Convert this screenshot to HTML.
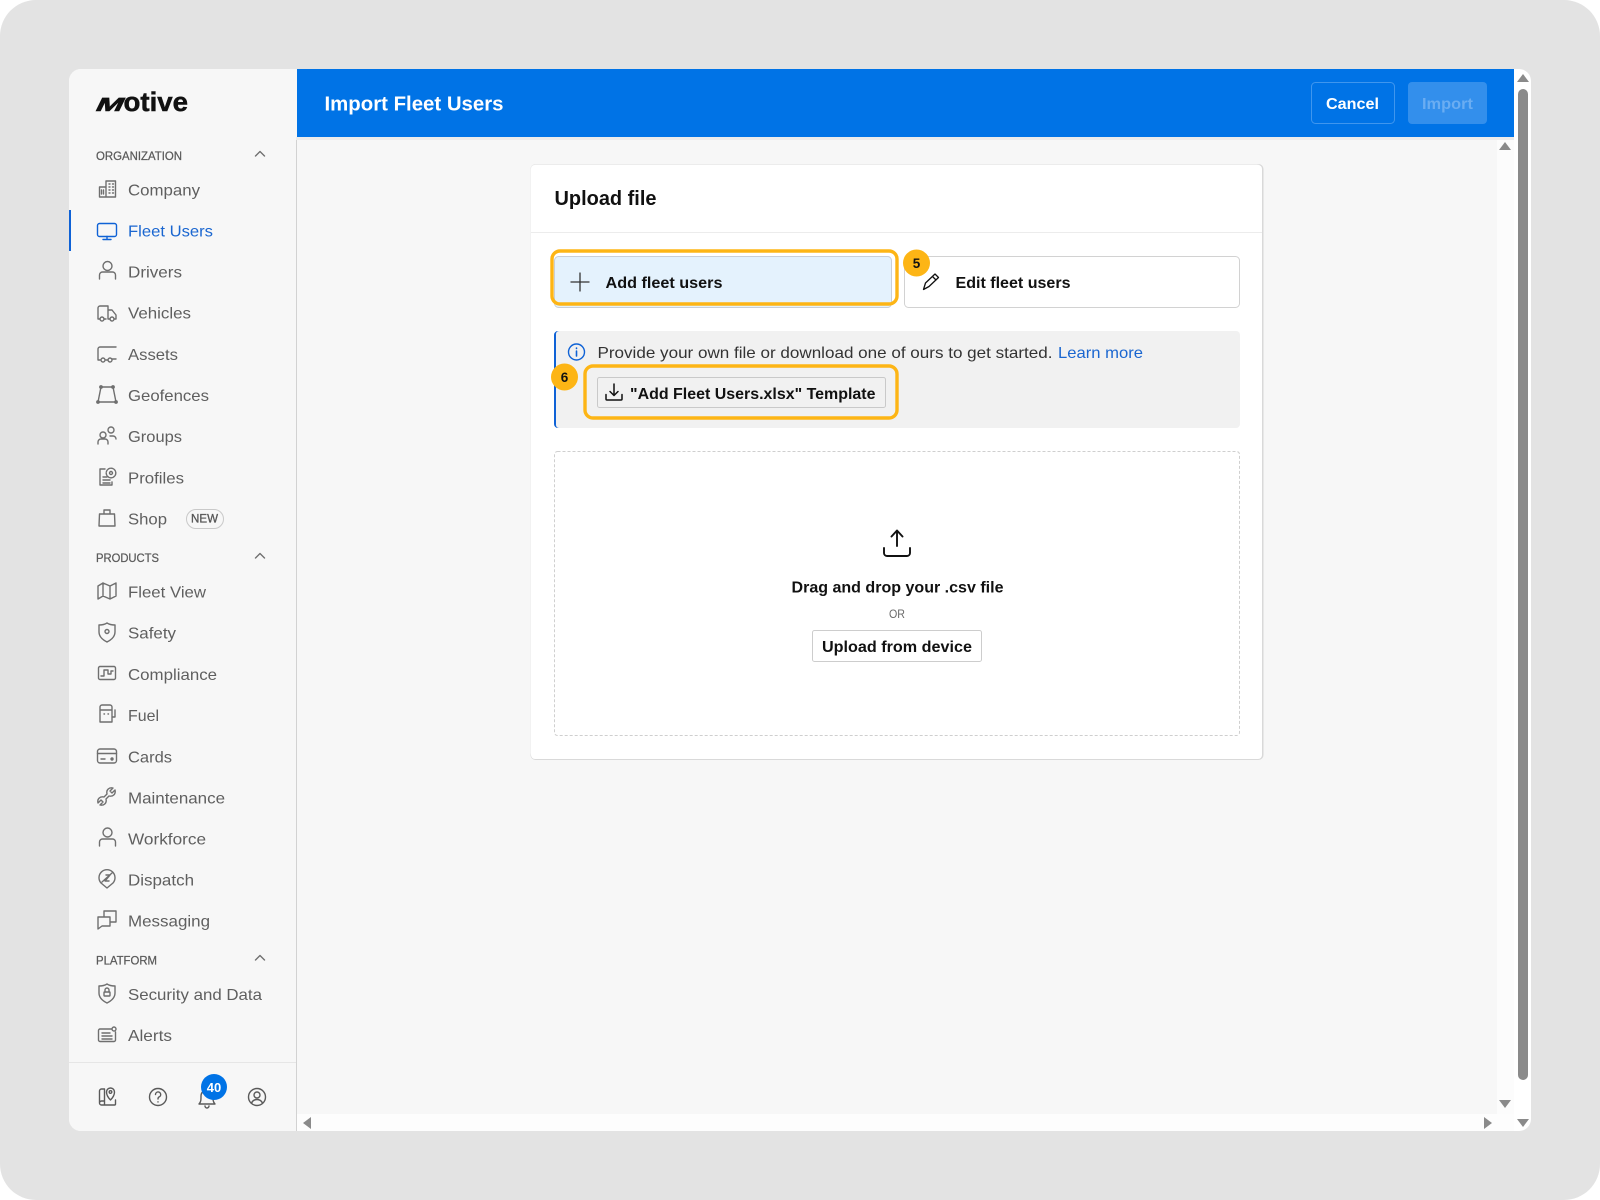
<!DOCTYPE html>
<html lang="en"><head><meta charset="utf-8"><title>Import Fleet Users</title>
<style>
html,body{margin:0;padding:0;background:#fff;width:1600px;height:1200px;overflow:hidden}
svg{display:block}
text{font-family:"Liberation Sans",sans-serif}
.n{font-size:16px;fill:#5f5f5f}
.s{font-size:12px;fill:#5a5a5a;stroke:#5a5a5a;stroke-width:.25}
.b{font-size:16px;font-weight:700;fill:#111}
.i{fill:none;stroke:#6f6f6f;stroke-width:1.4;stroke-linecap:round;stroke-linejoin:round}
.k{fill:none;stroke:#111;stroke-width:1.5;stroke-linecap:round;stroke-linejoin:round}
.o{fill:none;stroke:#fdb515;stroke-width:3.4}
.a{fill:#8a8a8a}
</style></head><body>
<svg xmlns="http://www.w3.org/2000/svg" width="1600" height="1200" viewBox="0 0 1600 1200">
<rect width="1600" height="1200" fill="#fff"/>
<rect width="1600" height="1200" rx="36" fill="#e3e3e3"/>
<rect x="69" y="69" width="1462" height="1062" rx="12" fill="#fff"/>
<path d="M81 69H297V1131H81a12 12 0 0 1-12-12V81a12 12 0 0 1 12-12z" fill="#f7f7f7"/>
<rect x="296" y="137" width="1" height="994" fill="#d2d2d2"/>
<rect x="297" y="137" width="1200" height="977" fill="#f7f7f7"/>
<rect x="1497" y="137" width="17" height="977" fill="#fcfcfc"/>
<rect x="297" y="1114" width="1217" height="17" fill="#fdfdfd"/>
<rect x="296" y="137" width="1218" height="3" fill="#ececec"/>
<rect x="297" y="69" width="1217" height="68" fill="#0073e6"/>

<text x="324.500" y="110.500" font-size="20" font-weight="700" fill="#fff" textLength="179" lengthAdjust="spacingAndGlyphs">Import Fleet Users</text>
<rect x="1311.500" y="82.500" width="83" height="41" rx="4" fill="none" stroke="#3f96ee"/>
<text x="1326" y="109" font-size="16" font-weight="700" fill="#fff" textLength="53" lengthAdjust="spacingAndGlyphs">Cancel</text>
<rect x="1408" y="82" width="79" height="42" rx="4" fill="#338fec"/>
<text x="1422" y="109" font-size="16" font-weight="700" fill="#6aadf2" textLength="51" lengthAdjust="spacingAndGlyphs">Import</text>

<path class="a" d="M1523 74l6 8h-12zM1523 1127l-6-8h12zM1505 142l6 8h-12zM1505 1108l-6-8h12zM1492 1123l-8-6v12zM303 1123l8-6v12z"/>
<rect x="1518" y="89" width="10" height="991" rx="5" fill="#8a8a8a"/>

<text font-size="19" font-weight="700" fill="#111" stroke="#111" stroke-width=".6" x="0" y="0" transform="translate(94 111) skewX(-26)" textLength="27" lengthAdjust="spacingAndGlyphs">M</text>
<text x="123.500" y="111" font-size="27" font-weight="700" fill="#111" stroke="#111" stroke-width=".5" textLength="64.500" lengthAdjust="spacingAndGlyphs">otive</text>

<text class="s" x="96" y="160" textLength="86" lengthAdjust="spacingAndGlyphs">ORGANIZATION</text>
<text class="s" x="96" y="562" textLength="63" lengthAdjust="spacingAndGlyphs">PRODUCTS</text>
<text class="s" x="96" y="964.500" textLength="61" lengthAdjust="spacingAndGlyphs">PLATFORM</text>
<path class="i" d="M255.500 156l4.500-4.500 4.500 4.500M255.500 558l4.500-4.500 4.500 4.500M255.500 960l4.500-4.500 4.500 4.500"/>

<rect x="69" y="210" width="2" height="41" fill="#0f62d6"/>
<text class="n" x="128" y="195.300" textLength="72" lengthAdjust="spacingAndGlyphs">Company</text>
<text class="n" x="128" y="236.300" textLength="85" lengthAdjust="spacingAndGlyphs" style="fill:#1a66d0">Fleet Users</text>
<text class="n" x="128" y="277.300" textLength="54" lengthAdjust="spacingAndGlyphs">Drivers</text>
<text class="n" x="128" y="318.300" textLength="63" lengthAdjust="spacingAndGlyphs">Vehicles</text>
<text class="n" x="128" y="360" textLength="50" lengthAdjust="spacingAndGlyphs">Assets</text>
<text class="n" x="128" y="401" textLength="81" lengthAdjust="spacingAndGlyphs">Geofences</text>
<text class="n" x="128" y="442" textLength="54" lengthAdjust="spacingAndGlyphs">Groups</text>
<text class="n" x="128" y="483.300" textLength="56" lengthAdjust="spacingAndGlyphs">Profiles</text>
<text class="n" x="128" y="524.300" textLength="39" lengthAdjust="spacingAndGlyphs">Shop</text>
<rect x="186.500" y="509.500" width="37" height="19" rx="9.500" fill="none" stroke="#c9c9c9"/>
<text x="191" y="522.500" font-size="12" fill="#555" stroke="#555" stroke-width=".3" textLength="27" lengthAdjust="spacingAndGlyphs">NEW</text>
<text class="n" x="128" y="597.500" textLength="78" lengthAdjust="spacingAndGlyphs">Fleet View</text>
<text class="n" x="128" y="638.500" textLength="48" lengthAdjust="spacingAndGlyphs">Safety</text>
<text class="n" x="128" y="680" textLength="89" lengthAdjust="spacingAndGlyphs">Compliance</text>
<text class="n" x="128" y="721" textLength="31" lengthAdjust="spacingAndGlyphs">Fuel</text>
<text class="n" x="128" y="762.500" textLength="44" lengthAdjust="spacingAndGlyphs">Cards</text>
<text class="n" x="128" y="803.500" textLength="97" lengthAdjust="spacingAndGlyphs">Maintenance</text>
<text class="n" x="128" y="844.500" textLength="78" lengthAdjust="spacingAndGlyphs">Workforce</text>
<text class="n" x="128" y="885.500" textLength="66" lengthAdjust="spacingAndGlyphs">Dispatch</text>
<text class="n" x="128" y="926.500" textLength="82" lengthAdjust="spacingAndGlyphs">Messaging</text>
<text class="n" x="128" y="1000" textLength="134" lengthAdjust="spacingAndGlyphs">Security and Data</text>
<text class="n" x="128" y="1041" textLength="44" lengthAdjust="spacingAndGlyphs">Alerts</text>

<g class="i">
<g transform="translate(107.500 189)"><path d="M-1.500-8V8H8V-8zM-1.500-2H-8V8H-1.500M-6 1v4M-4 1v4M1.500-5h1M5-5h1M1.500-2h1M5-2h1M1.500 1h1M5 1h1M1.500 4h1M5 4h1"/></g>
<g transform="translate(107 230)" style="stroke:#0f62d6"><rect x="-9.500" y="-6.500" width="19" height="13" rx="2"/><path d="M0 6.500V9M-4 9.500H4"/></g>
<g transform="translate(107.500 272)"><circle cy="-6" r="4.500"/><path d="M-8 7V3a3 3 0 0 1 3-3H5a3 3 0 0 1 3 3v4"/></g>
<g transform="translate(107 313)"><path d="M-7 6H-9V-5a2 2 0 0 1 2-2H1V6M1-3H5L9 2V6H7M-1 6H-3M1 6H3"/><circle cx="-5" cy="6" r="2"/><circle cx="5" cy="6" r="2"/></g>
<g transform="translate(107 354)"><path d="M9-7H-7a2 2 0 0 0-2 2V6H-7M9 5H5M-1 6H1"/><circle cx="-4" cy="6" r="2"/><circle cx="3" cy="6" r="2"/></g>
<g transform="translate(107 395)"><path d="M-6-8H6L9 7H-9z"/><circle cx="-6" cy="-8" r="1.200"/><circle cx="6" cy="-8" r="1.200"/><circle cx="-9" cy="7" r="1.200"/><circle cx="9" cy="7" r="1.200"/></g>
<g transform="translate(107 436)"><circle cx="-4" cy="-1" r="3"/><circle cx="4" cy="-6" r="3"/><path d="M-9 8V6a3 3 0 0 1 3-3H-2a3 3 0 0 1 3 3v2M3 0H6a3 3 0 0 1 3 3"/></g>
<g transform="translate(107 477)"><path d="M-2-8H-7V8H5V5M-4 0H0M-4 3H3M-4 6H3"/><circle cx="4" cy="-4" r="1.500"/><circle cx="4" cy="-4" r="4.800" stroke-dasharray="2.200 1"/></g>
<g transform="translate(107 518)"><path d="M-7.500-4H7.500L8 8H-8zM-3-4V-8H3V-4"/></g>
<g transform="translate(107 591)"><path d="M-9-5L-4-8 3-5 9-8V5L3 8-4 5-9 8zM-4-8V5M3-5V8"/></g>
<g transform="translate(107 632)"><path d="M0-9C3-7 6-7 8-7V0C8 5 4 8 0 10-4 8-8 5-8 0V-7C-6-7-3-7 0-9z"/><circle cy="-.500" r="2"/></g>
<g transform="translate(107 673)"><rect x="-8.500" y="-6.500" width="17" height="13" rx="1.500"/><path d="M-6 3H-3V-3H1V1H4V-2H6"/></g>
<g transform="translate(107 714)"><path d="M-7-7a2 2 0 0 1 2-2H3a2 2 0 0 1 2 2V8H-7zM-7-4H5M5 3H8V-4M-3 0h.500M1 0h.500"/></g>
<g transform="translate(107 756)"><rect x="-9.500" y="-7" width="19" height="14" rx="2.500"/><path d="M-9.500-2.500H9.500M-6 3H-2"/><circle cx="5" cy="3" r="1" style="fill:#6f6f6f"/></g>
<g transform="translate(107 797)"><path d="M8-7L5-4 3-6 6-9C2-10-1-7 0-3L-3 0C-7-1-10 2-9 6L-6 3-4 5-7 8C-3 9 0 6-1 2L2-1C6 0 9-3 8-7z"/></g>
<g transform="translate(107.500 838)"><circle cy="-5.500" r="4.500"/><path d="M-8 8V4a3 3 0 0 1 3-3H5a3 3 0 0 1 3 3v4"/></g>
<g transform="translate(107 878)"><path d="M0 10L-6 5A8 8 0 1 1 6 5z"/><path d="M-5 4L5-5M-1-3H3L-2 3H2"/></g>
<g transform="translate(107 920)"><path d="M-3-3V-9H9V2H3M-9-3H3V6H-5L-9 9z"/></g>
<g transform="translate(107 993)"><path d="M0-9C3-7 6-7 8-7V0C8 5 4 8 0 10-4 8-8 5-8 0V-7C-6-7-3-7 0-9z"/><rect x="-3" y="-1" width="6" height="4" rx=".500"/><path d="M-2-1V-3a2 2 0 0 1 4 0V-1"/></g>
<g transform="translate(107 1035)"><path d="M5-6H-7a1.500 1.500 0 0 0-1.500 1.500V5A1.500 1.500 0 0 0-7 6.500H7A1.500 1.500 0 0 0 8.500 5V-3M-5-2H3M-5 1H5M-5 4H5"/><circle cx="7" cy="-6" r="2"/></g>
</g>

<rect x="69" y="1062" width="227" height="1" fill="#e6e6e6"/>
<g class="i" style="stroke:#5a5a5a">
<g transform="translate(107.500 1097)"><path d="M-3-8H-6a2 2 0 0 0-2 2V6a2 2 0 0 0 2 2H7A1 1 0 0 0 8 7V3M-3-8V8M-8 6a2 2 0 0 1 2-2H-3"/><path d="M3 3C0 0-1-3-1-5A4 4 0 0 1 7-5C7-3 6 0 3 3z"/><circle cx="3" cy="-5" r="1.300"/></g>
<g transform="translate(158 1097)"><circle r="8.500"/><path d="M-2.500-2.500A2.600 2.600 0 1 1 1 0C.200.400 0 1 0 2M0 4.800v.200"/></g>
<g transform="translate(207 1098)"><path d="M-8 6C-6 4-6 2-6-2A6 6 0 0 1 6-2C6 2 6 4 8 6zM-2 8a2 2 0 0 0 4 0"/></g>
<g transform="translate(257 1097)"><circle r="8.500"/><circle cy="-2" r="3"/><path d="M-5.500 6C-4 3-2 2.500 0 2.500S4 3 5.500 6"/></g>
</g>
<circle cx="214" cy="1087" r="13" fill="#0073e6"/>
<text x="214" y="1092" text-anchor="middle" font-size="13" font-weight="700" fill="#fff">40</text>

<rect x="530.500" y="164" width="733" height="596" rx="5" fill="#d9d9d9"/>
<rect x="530.500" y="164" width="731" height="594" rx="5" fill="#ececec"/>
<rect x="531" y="165" width="731" height="594" rx="4" fill="#fff"/>
<rect x="531" y="232" width="731" height="1" fill="#ececec"/>
<text x="554.500" y="205" font-size="20" font-weight="700" fill="#111" textLength="102" lengthAdjust="spacingAndGlyphs">Upload file</text>

<rect x="554.500" y="256.500" width="337" height="51" rx="4" fill="#e4f2fd" stroke="#c9cfd6"/>
<path class="k" d="M580 273V291M571 282H589" style="stroke:#333;stroke-width:1.300"/>
<text class="b" x="605.500" y="288" textLength="117" lengthAdjust="spacingAndGlyphs">Add fleet users</text>
<rect x="552" y="251" width="345" height="53" rx="8" class="o"/>

<rect x="904.500" y="256.500" width="335" height="51" rx="4" fill="#fff" stroke="#d2d2d2"/>
<path class="k" d="M923.500 289.500L925.500 283 935 274 938.500 277.500 929 286.500zM932.500 276.500L936 280" style="stroke-width:1.300"/>
<text class="b" x="955.500" y="288" textLength="115" lengthAdjust="spacingAndGlyphs">Edit fleet users</text>
<circle cx="916.500" cy="263" r="13.500" fill="#fdb515"/>
<text x="916.500" y="268" text-anchor="middle" font-size="13.500" font-weight="700" fill="#111">5</text>

<rect x="554" y="331" width="686" height="97" rx="4" fill="#f1f1f1"/>
<path d="M558 331a4 4 0 0 0-4 4V424a4 4 0 0 0 4 4h1a3 3 0 0 1-3-3V334a3 3 0 0 1 3-3z" fill="#0f62d6"/>
<circle cx="576.500" cy="352" r="8" fill="none" stroke="#0f62d6" stroke-width="1.400"/>
<path d="M576.500 351V356M576.500 348v.500" fill="none" stroke="#0f62d6" stroke-width="1.600" stroke-linecap="round"/>
<text x="597.500" y="358" font-size="16" fill="#333" textLength="455" lengthAdjust="spacingAndGlyphs">Provide your own file or download one of ours to get started.</text>
<text x="1058" y="358" font-size="16" fill="#1a66d0" textLength="85" lengthAdjust="spacingAndGlyphs">Learn more</text>

<rect x="597.500" y="377.500" width="288" height="30" rx="2" fill="#f1f1f1" stroke="#c9c9c9"/>
<path class="k" d="M614 384V395M610 391.500L614 395.500 618 391.500M606 394.500V399a1 1 0 0 0 1 1H621a1 1 0 0 0 1-1V394.500"/>
<text class="b" x="630" y="399" textLength="245.500" lengthAdjust="spacingAndGlyphs">"Add Fleet Users.xlsx" Template</text>
<rect x="585" y="366" width="312" height="52" rx="8" class="o"/>
<circle cx="564.500" cy="377" r="13.500" fill="#fdb515"/>
<text x="564.500" y="382" text-anchor="middle" font-size="13.500" font-weight="700" fill="#111">6</text>

<rect x="554.500" y="451.500" width="685" height="284" rx="3" fill="#fff" stroke="#cfcfcf" stroke-dasharray="3 2"/>
<path class="k" d="M897 531V546M891.500 536.500L897 530.500 902.500 536.500M884 548V553a3 3 0 0 0 3 3H907a3 3 0 0 0 3-3V548" style="stroke-width:1.900"/>
<text class="b" x="791.500" y="592.500" textLength="212" lengthAdjust="spacingAndGlyphs" style="font-size:15.500px">Drag and drop your .csv file</text>
<text x="889" y="618" font-size="12" fill="#6a6a6a" textLength="16" lengthAdjust="spacingAndGlyphs">OR</text>
<rect x="812.500" y="630.500" width="169" height="31" rx="2" fill="#fff" stroke="#cdcdcd"/>
<text class="b" x="822" y="652" textLength="150" lengthAdjust="spacingAndGlyphs">Upload from device</text>
</svg>
</body></html>
